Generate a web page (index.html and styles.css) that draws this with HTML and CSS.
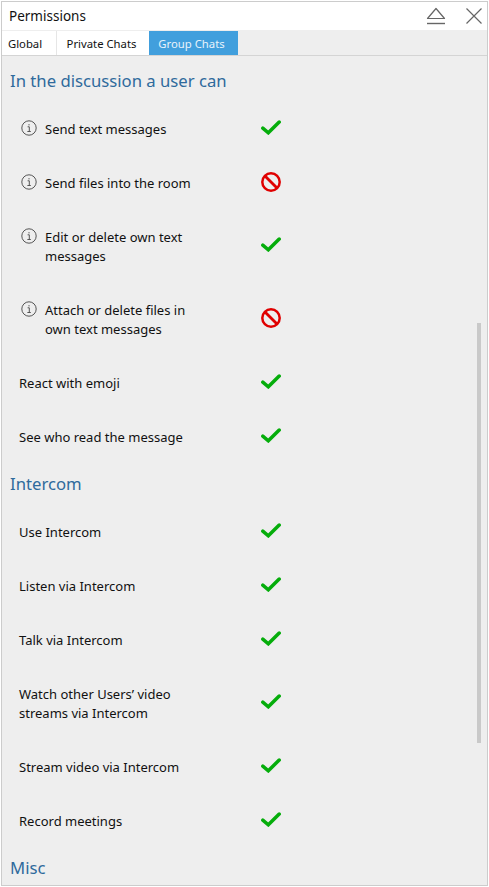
FILE: index.html
```html
<!DOCTYPE html>
<html lang="en">
<head>
<meta charset="utf-8">
<title>Permissions</title>
<link rel="stylesheet" href="styles.css">
</head>
<body>
<svg class="defs" width="0" height="0" aria-hidden="true">
  <symbol id="yes" viewBox="0 0 20 15"><path d="M1.8 8.2 7.3 12.8 18.2 2" fill="none" stroke="#05ad0b" stroke-width="3.5" stroke-linecap="round" stroke-linejoin="miter"/></symbol>
  <symbol id="no" viewBox="0 0 22 22"><circle cx="11" cy="11" r="8.7" fill="none" stroke="#e00000" stroke-width="2.5"/><path d="M5 5 17 17" stroke="#e00000" stroke-width="2.8"/></symbol>
  <symbol id="info" viewBox="0 0 16 16"><circle cx="8" cy="8" r="7.2" fill="none" stroke="#555" stroke-width="1"/><path d="M6.6 6.8H8.3V11.3M6.4 11.5H9.8M8 4.1V5.4" fill="none" stroke="#555" stroke-width="1"/></symbol>
</svg>
<div class="window">
  <header class="titlebar">
    <span class="title">Permissions</span>
    <div class="controls">
      <svg class="eject" width="20" height="19" viewBox="0 0 20 19"><path d="M10 1.5 18.5 11.5H1.5Z" fill="none" stroke="#666" stroke-width="1.2" stroke-linejoin="round"/><path d="M1 16.5H19" stroke="#666" stroke-width="1.4"/></svg>
      <svg class="close" width="18" height="18" viewBox="0 0 18 18"><path d="M1.5 1.5 16.5 16.5M16.5 1.5 1.5 16.5" stroke="#666" stroke-width="1.2"/></svg>
    </div>
  </header>
  <nav class="tabs">
    <span class="tab tab-first">Global</span>
    <span class="tab tab-second">Private Chats</span>
    <span class="tab tab-active">Group Chats</span>
  </nav>
  <main class="content">
    <h2>In the discussion a user can</h2>
    <div class="row"><svg class="i"><use href="#info"/></svg><span class="label">Send text messages</span><svg class="yes"><use href="#yes"/></svg></div>
    <div class="row"><svg class="i"><use href="#info"/></svg><span class="label">Send files into the room</span><svg class="no"><use href="#no"/></svg></div>
    <div class="row tall"><svg class="i"><use href="#info"/></svg><span class="label">Edit or delete own text<br>messages</span><svg class="yes"><use href="#yes"/></svg></div>
    <div class="row tall"><svg class="i"><use href="#info"/></svg><span class="label">Attach or delete files in<br>own text messages</span><svg class="no"><use href="#no"/></svg></div>
    <div class="row plain"><span class="label">React with emoji</span><svg class="yes"><use href="#yes"/></svg></div>
    <div class="row plain"><span class="label">See who read the message</span><svg class="yes"><use href="#yes"/></svg></div>
    <h2>Intercom</h2>
    <div class="row plain"><span class="label">Use Intercom</span><svg class="yes"><use href="#yes"/></svg></div>
    <div class="row plain"><span class="label">Listen via Intercom</span><svg class="yes"><use href="#yes"/></svg></div>
    <div class="row plain"><span class="label">Talk via Intercom</span><svg class="yes"><use href="#yes"/></svg></div>
    <div class="row plain tall"><span class="label">Watch other Users’ video<br>streams via Intercom</span><svg class="yes"><use href="#yes"/></svg></div>
    <div class="row plain"><span class="label">Stream video via Intercom</span><svg class="yes"><use href="#yes"/></svg></div>
    <div class="row plain"><span class="label">Record meetings</span><svg class="yes"><use href="#yes"/></svg></div>
    <h2>Misc</h2>
    <div class="scrollbar"></div>
  </main>
</div>
</body>
</html>
```
FILE: styles.css
```css
html, body { margin: 0; padding: 0; height: 100%; overflow: hidden; }
body { font-family: "Noto Sans", "Open Sans", sans-serif; font-size: 13px; color: #111; background: #fff; }
.defs { position: absolute; }
.window { box-sizing: border-box; width: 487px; height: 885px; margin: 1px; border: 1px solid #ccc; display: flex; flex-direction: column; overflow: hidden; position: relative; }
.titlebar { height: 28px; flex: none; display: flex; align-items: center; justify-content: space-between; padding: 0 4px 0 7px; border-bottom: 1px solid #eee; font-size: 13.5px; }
.controls { display: flex; align-items: center; gap: 19px; }
.tabs { height: 25px; flex: none; display: flex; background: #eee; border-bottom: 1px solid #d4d4d4; box-sizing: border-box; }
.tab { display: flex; align-items: center; justify-content: center; background: #fff; font-size: 11.3px; box-sizing: border-box; }
.tab-first { width: 55px; border-right: 1px solid #e6e6e6; padding-right: 8px; }
.tab-second { width: 92px; padding-right: 3px; }
.tab-active { width: 89px; background: #419fdd; color: #e8f3fb; padding-right: 4px; }
.content { flex: 1; background: #eee; padding-top: 5px; position: relative; min-height: 0; }
h2 { margin: 0; height: 41px; line-height: 40px; font-size: 16.7px; font-weight: 400; color: #2f6a9c; padding-left: 8px; }
.row { position: relative; padding: 18px 0 17px 43px; line-height: 19px; width: 220px; }
.row.plain { padding-left: 17px; width: 246px; }
.label { display: block; white-space: nowrap; }
.i { position: absolute; left: 19px; top: 18px; width: 16px; height: 16px; }
.yes, .no { position: absolute; top: 50%; }
.yes { left: 259px; width: 20px; height: 15px; margin-top: -9px; }
.no { left: 258px; width: 22px; height: 22px; margin-top: -12px; }
.tall .yes { margin-top: -10px; }
.tall .no { margin-top: -13px; }
.scrollbar { position: absolute; left: 475px; top: 267px; width: 4px; height: 420px; background: #c9c9c9; }
```
